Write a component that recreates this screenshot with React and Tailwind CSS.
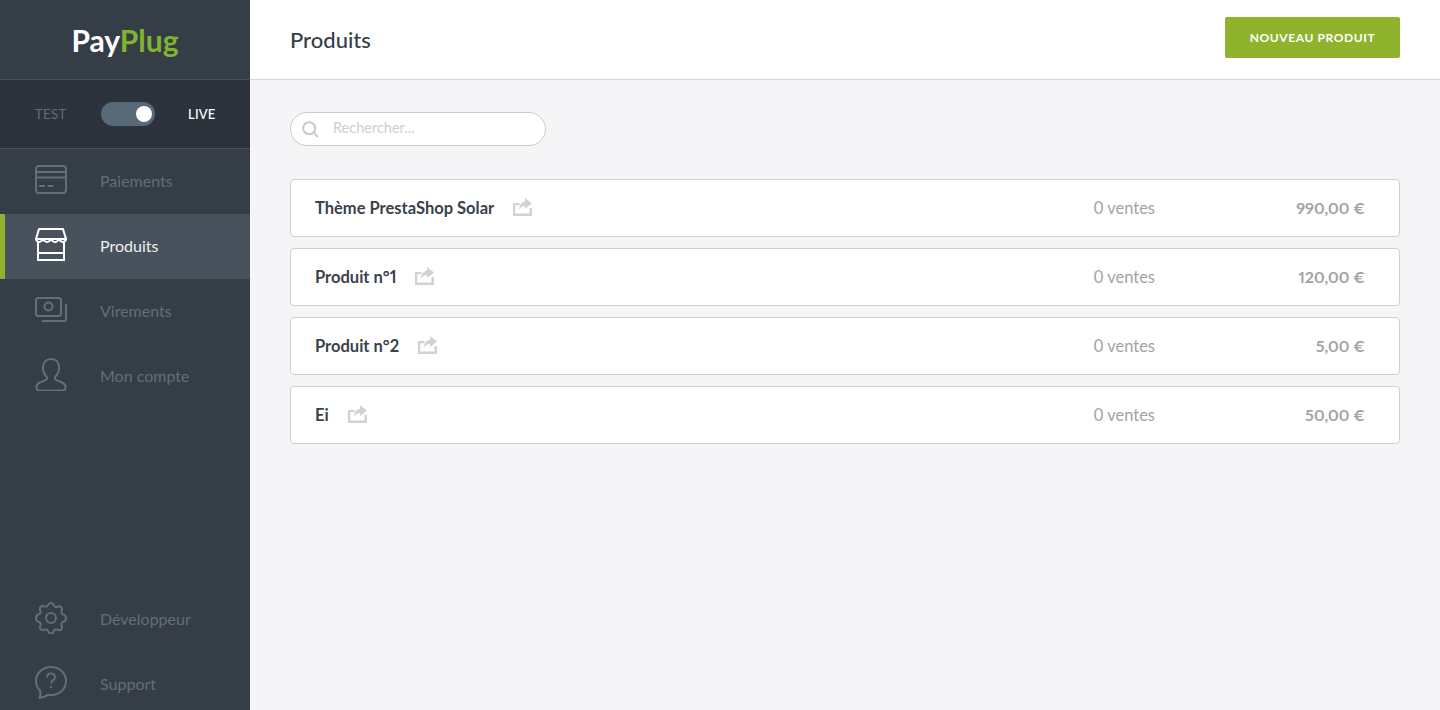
import React from 'react';

const sans = 'font-["Lato","Noto_Sans",sans-serif]';

const CardIcon = () => (
    <svg width="32" height="29" viewBox="0 0 32 29" fill="none" stroke="currentColor" strokeWidth="2">
        <rect x="1" y="1" width="30" height="27" rx="3" />
        <path d="M1 7h30M1 12.500h30M4 21h6M12.500 21h6" />
    </svg>
);

const StoreIcon = () => (
    <svg width="32" height="33" viewBox="0 0 32 33" fill="none" stroke="currentColor" strokeWidth="2">
        <path d="M4 1h24l3 10H1z" strokeLinejoin="round" />
        <path d="M1 11c0 2 2 3 3.500 3 1.500 0 2.500-2 3.500-2s2 2 4 2 2.500-2 4-2 2 2 4 2 2.500-2 4-2 2 2 3.500 2 3.500-1 3.500-3" />
        <path d="M3 14v18h26V14M3 25h26" />
    </svg>
);

const MoneyIcon = () => (
    <svg width="32" height="25" viewBox="0 0 32 25" fill="none" stroke="currentColor" strokeWidth="2">
        <rect x="1" y="1" width="25" height="18" rx="2.500" />
        <circle cx="13.500" cy="9.500" r="4" />
        <path d="M31 7v15.500a1.500 1.500 0 0 1-1.500 1.500H7" />
    </svg>
);

const UserIcon = () => (
    <svg width="32" height="33" viewBox="0 0 32 33" fill="none" stroke="currentColor" strokeWidth="2">
        <path d="M16 1c-5 0-8 3.500-8 8.500 0 4 1.500 7 3.500 9 1 1.500.5 3-1 3.700L4 25c-2 1-2.500 2.500-2.500 4.500 0 2 1 3 2.500 3h24c1.500 0 2.500-1 2.500-3 0-2-.5-3.500-2.500-4.500l-6.500-2.800c-1.500-.7-2-2.200-1-3.700 2-2 3.500-5 3.500-9C24 4.500 21 1 16 1z" />
    </svg>
);

const GearIcon = () => (
    <svg width="32" height="32" viewBox="0 0 32 32" fill="none" stroke="currentColor" strokeWidth="2">
        <path d="M16 1c1.500 0 2.500 1 3 2.500.5 1.500 2 2 3.500 1.300 1.400-.7 2.800-.4 3.700.5 1 1 1.200 2.300.5 3.700-.7 1.500-.2 3 1.300 3.500C29.500 12.500 31 14.500 31 16s-1.500 3.500-3 4c-1.500.5-2 2-1.300 3.500.7 1.400.5 2.700-.5 3.700-.9.900-2.300 1.200-3.700.5-1.500-.7-3-.2-3.500 1.300-.5 1.500-1.500 2.500-3 2.500s-2.500-1-3-2.500c-.5-1.500-2-2-3.500-1.300-1.400.7-2.800.4-3.700-.5-1-1-1.200-2.300-.5-3.700.7-1.500.2-3-1.300-3.500C2.500 19.500 1 17.500 1 16s1.500-3.500 3-4c1.500-.5 2-2 1.300-3.500-.7-1.400-.5-2.700.5-3.700.9-.9 2.300-1.200 3.700-.5 1.500.7 3 .2 3.500-1.300C13.500 2 14.500 1 16 1z" />
        <circle cx="16" cy="16" r="5" />
    </svg>
);

const HelpIcon = () => (
    <svg width="32" height="33" viewBox="0 0 32 33" fill="none" stroke="currentColor" strokeWidth="2">
        <path d="M16 1C7.500 1 1 7.200 1 15c0 4 1.500 7 4 9.500.5 2.500.5 5-.5 7.500 3.500-.5 6.500-2 8.500-3.200 1 .2 2 .2 3 .2 8.500 0 15-6 15-14S24.500 1 16 1z" strokeLinejoin="round" />
        <path d="M12 11.500c0-2.500 1.800-4 4-4s4 1.500 4 3.700c0 3-4 3.300-4 6.300" />
        <path d="M16 20v2" />
    </svg>
);

const ShareIcon = () => (
    <svg width="19" height="18" viewBox="0 0 19 18" className="block text-[#d2d2d2]">
        <path d="M0 5h6.500v2.200H2.200v8.300h14.300V10H19v8H0z" fill="currentColor" />
        <path d="M12 0l7 5.500-7 5.500V8c-2.800 0-4.600 1.300-6 4 .2-4.800 2.400-7.600 6-8.200z" fill="currentColor" />
    </svg>
);

const SearchIcon = () => (
    <svg width="17" height="17" viewBox="0 0 17 17" fill="none" stroke="#c9c9c9" strokeWidth="2">
        <circle cx="7.200" cy="7.200" r="6" />
        <path d="M11.500 11.500l4.500 4.500" />
    </svg>
);

const NavItem = ({ icon, label, active }) => (
    <a className={`flex items-center h-[65px] ${active ? 'bg-[#48525c] border-l-[5px] border-[#8fb32d] pl-[30px] text-white' : 'pl-[35px] text-[#626e79]'}`}>
        <span className="w-[32px] mb-[4px] flex justify-center">{icon}</span>
        <span className={`ml-[33px] mb-[2px] text-[16px] ${active ? 'text-[#eef0f1]' : ''}`}>{label}</span>
    </a>
);

const products = [
    { name: 'Thème PrestaShop Solar', price: '990,00 €' },
    { name: 'Produit n°1', price: '120,00 €' },
    { name: 'Produit n°2', price: '5,00 €' },
    { name: 'Ei', price: '50,00 €' },
];

const App = () => (
    <div className={`flex h-[710px] overflow-hidden bg-[#f5f5f7] ${sans}`}>
        <aside className="w-[250px] shrink-0 bg-[#353d47] flex flex-col">
            <div className="h-[80px] flex items-center justify-center border-b border-[#4a535c]">
                <span className="text-[30px] font-bold leading-none">
                    <span className="text-white">Pay</span><span className="text-[#7fb52c]">Plug</span>
                </span>
            </div>
            <div className="h-[69px] bg-[#2c333d] border-b border-[#4a535c] flex items-center pl-[35px]">
                <span className="text-[13px] mt-[2px] text-[#626e79] tracking-[0.4px] w-[66px]">TEST</span>
                <span className="w-[54px] h-[24px] rounded-full bg-[#586a78] flex items-center justify-end pr-[3px]">
                    <span className="w-[16px] h-[16px] rounded-full bg-white" />
                </span>
                <span className="ml-[33px] mt-[2px] text-[13px] text-white tracking-[0.2px] font-medium">LIVE</span>
            </div>
            <nav className="flex flex-col">
                <NavItem icon={<CardIcon />} label="Paiements" />
                <NavItem icon={<StoreIcon />} label="Produits" active />
                <NavItem icon={<MoneyIcon />} label="Virements" />
                <NavItem icon={<UserIcon />} label="Mon compte" />
            </nav>
            <nav className="mt-auto flex flex-col -mb-[7px]">
                <NavItem icon={<GearIcon />} label="Développeur" />
                <NavItem icon={<HelpIcon />} label="Support" />
            </nav>
        </aside>
        <main className="flex-1 flex flex-col">
            <header className="h-[80px] bg-white border-b border-[#d6d6d6] flex items-center justify-between pl-[40px] pr-[40px]">
                <h1 className="text-[22px] font-medium text-[#353d47]">Produits</h1>
                <button className="w-[175px] h-[41px] mb-[4px] rounded-[2px] bg-[#8fb32d] text-white text-[12px] font-bold tracking-[0.6px]">NOUVEAU PRODUIT</button>
            </header>
            <div className="px-[40px] pt-[32px]">
                <div className="w-[256px] h-[34px] rounded-full border border-[#cbcbcb] bg-white flex items-center pl-[11px]">
                    <SearchIcon />
                    <span className="ml-[14px] mb-[2px] text-[14.500px] text-[#cfcfcf]">Rechercher...</span>
                </div>
                <div className="mt-[33px] flex flex-col gap-[11px]">
                    {products.map(p => (
                        <div key={p.name} className="h-[58px] rounded-[4px] border border-[#cfcfcf] bg-white flex items-center pl-[24px] pr-[34px]">
                            <span className="text-[16.500px] font-bold text-[#3a424c] proportional-nums">{p.name}</span>
                            <span className="ml-[19px] mb-[3px]"><ShareIcon /></span>
                            <span className="ml-auto text-[16.500px] text-[#a3a3a3]">0 ventes</span>
                            <span className="w-[210px] text-right text-[16px] font-bold text-[#a3a3a3] proportional-nums">{p.price}</span>
                        </div>
                    ))}
                </div>
            </div>
        </main>
    </div>
);

export default App;
